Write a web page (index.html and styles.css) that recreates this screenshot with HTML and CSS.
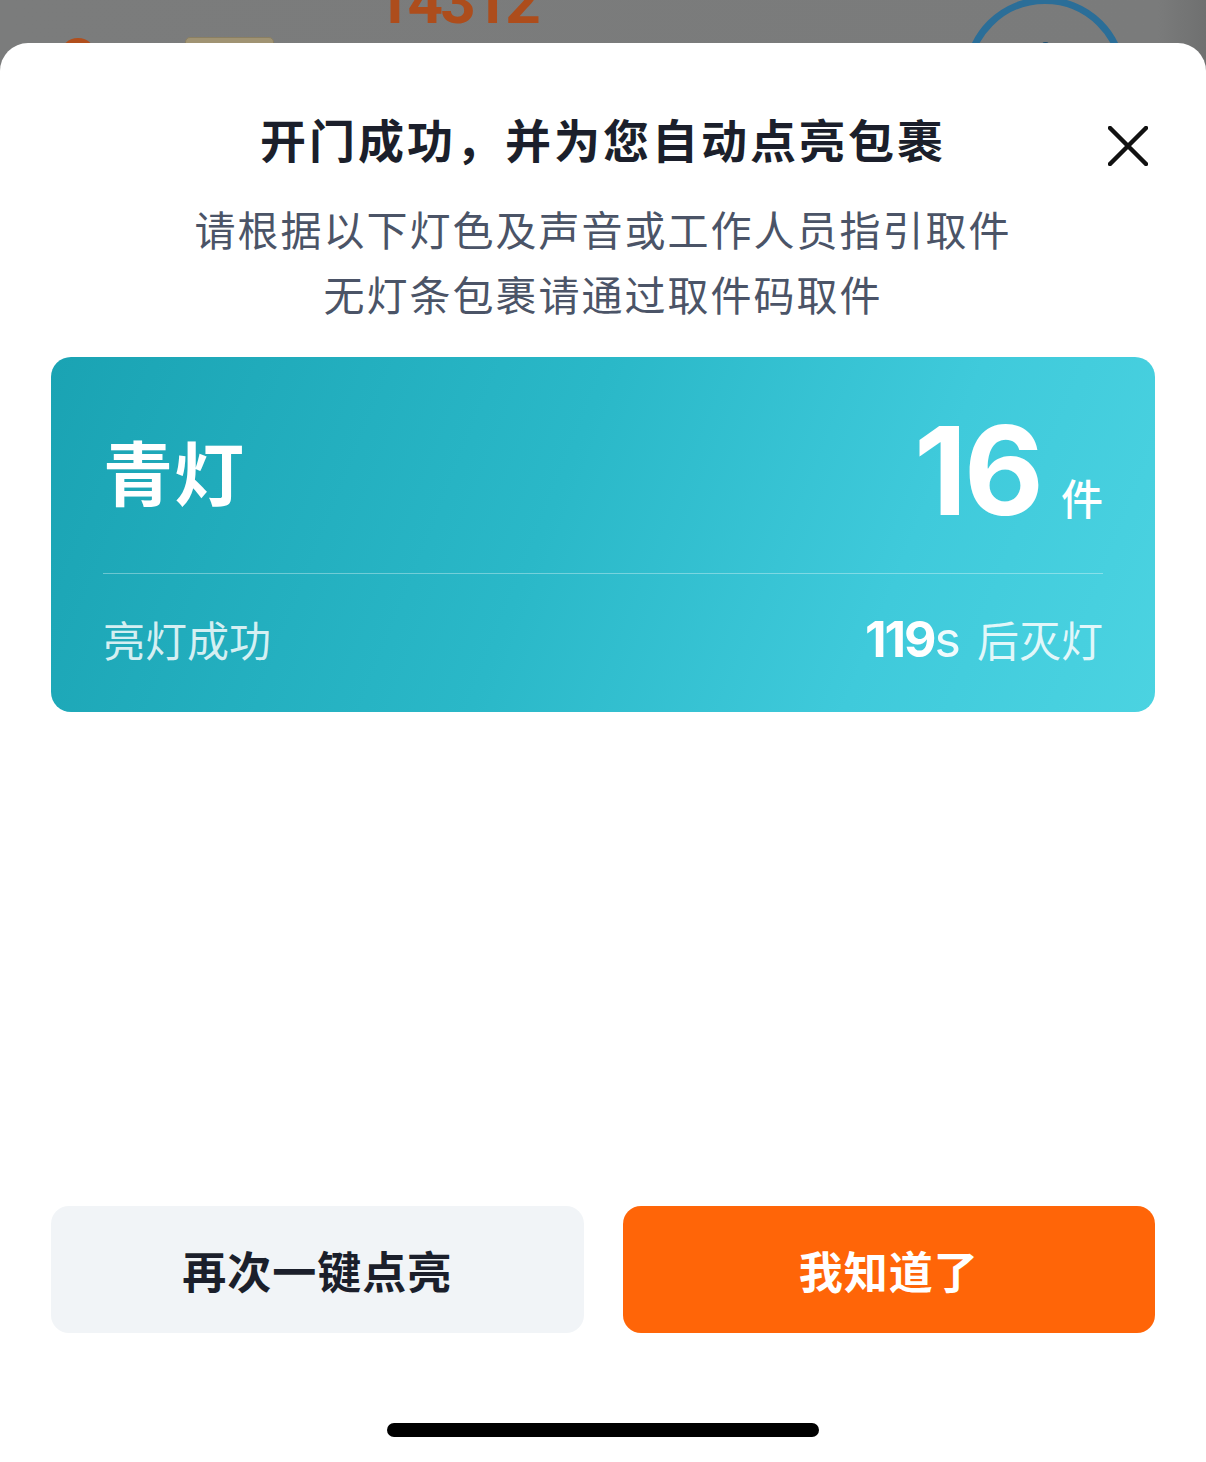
FILE: index.html
```html
<!DOCTYPE html>
<html lang="zh-CN">
<head>
    <meta charset="UTF-8">
    <meta name="viewport" content="width=device-width, initial-scale=1.0">
    <title>开门成功</title>
    <link rel="stylesheet" href="styles.css">
</head>
<body>
    <div class="screen">
        <!-- page behind the sheet, only its bottom edge shows -->
        <div class="backdrop">
            <span class="bg-dot"></span>
            <span class="bg-tag"></span>
            <span class="bg-code">14312</span>
            <span class="bg-ring"><i></i></span>
        </div>

        <div class="sheet">
            <div class="sheet-head">
                <span></span>
                <h2 class="title">开门成功，并为您自动点亮包裹</h2>
                <button class="close" aria-label="关闭">
                    <svg width="40" height="40" viewBox="0 0 40 40">
                        <path d="M2 2 L38 38 M38 2 L2 38" stroke="#111" stroke-width="4.5" stroke-linecap="round" fill="none"/>
                    </svg>
                </button>
            </div>

            <p class="tip">请根据以下灯色及声音或工作人员指引取件<br>无灯条包裹请通过取件码取件</p>

            <div class="light-card">
                <div class="card-top">
                    <span class="light-name">青灯</span>
                    <span class="count"><b>16</b><em>件</em></span>
                </div>
                <div class="card-bottom">
                    <span class="status">亮灯成功</span>
                    <span class="timer"><b>119</b>s<i>后灭灯</i></span>
                </div>
            </div>

            <div class="actions">
                <button class="btn btn-light">再次一键点亮</button>
                <button class="btn btn-primary">我知道了</button>
            </div>

            <div class="home-bar"></div>
        </div>
    </div>
</body>
</html>
```

FILE: styles.css
```css
html, body {
    margin: 0;
    height: 100%;
}
body {
    font-family: "Noto Sans CJK SC", "Noto Sans", sans-serif;
    background: linear-gradient(90deg, #7b7c7c 0%, #7a7b7b 96%, #6f7070 100%);
}
.screen {
    min-height: 100vh;
    display: flex;
    flex-direction: column;
}
.backdrop {
    height: 43px;
    position: relative;
    overflow: hidden;
    flex: none;
}
.bg-dot {
    position: absolute;
    left: 60px;
    top: 38px;
    width: 36px;
    height: 36px;
    border-radius: 50%;
    background: #b14f1d;
}
.bg-tag {
    position: absolute;
    left: 185px;
    top: 37px;
    width: 87px;
    height: 30px;
    border-radius: 5px;
    background: #a09373;
    border: 1px solid #8a7f62;
}
.bg-code {
    position: absolute;
    left: 375px;
    top: -29px;
    font-family: Roboto, "Liberation Sans", sans-serif;
    font-weight: 700;
    font-size: 62px;
    letter-spacing: -3px;
    line-height: 62px;
    color: #ad4d1c;
}
.bg-ring {
    position: absolute;
    left: 964px;
    top: -3px;
    width: 148px;
    height: 148px;
    border: 7px solid #2b6e98;
    border-radius: 50%;
}
.bg-ring i {
    position: absolute;
    left: 71px;
    top: 38px;
    width: 7px;
    height: 10px;
    border-radius: 3px;
    background: #1f4f70;
}

.sheet {
    flex: 1;
    background: #ffffff;
    border-radius: 28px 28px 0 0;
    padding: 65px 51px 25px;
    display: flex;
    flex-direction: column;
}
.sheet-head {
    display: grid;
    grid-template-columns: 1fr auto 1fr;
}
.title {
    margin: 0;
    font-size: 46px;
    line-height: 60px;
    font-weight: 700;
    letter-spacing: 3px;
    color: #1b1f2b;
    white-space: nowrap;
}
.close {
    justify-self: end;
    align-self: start;
    margin: 18px 7px 0 0;
    width: 40px;
    height: 40px;
    padding: 0;
    border: none;
    background: none;
    cursor: pointer;
}
.close svg {
    display: block;
}
.tip {
    margin: 28px 0 0;
    text-align: center;
    font-size: 41px;
    line-height: 65px;
    letter-spacing: 2px;
    color: #4b5467;
}

.light-card {
    margin-top: 31px;
    height: 355px;
    box-sizing: border-box;
    padding: 0 52px;
    border-radius: 20px;
    background: linear-gradient(112deg, #1aa3b3 0%, #2ab8c8 45%, #3fcadb 75%, #4bd3e1 100%);
    color: #ffffff;
    display: flex;
    flex-direction: column;
}
.card-top {
    height: 216px;
    box-sizing: border-box;
    padding-top: 10px;
    display: flex;
    align-items: center;
    justify-content: space-between;
}
.light-name {
    font-size: 70px;
    font-weight: 700;
    letter-spacing: 1px;
}
.count {
    display: flex;
    align-items: baseline;
}
.count b {
    font-family: Inter, Roboto, sans-serif;
    font-size: 123px;
    line-height: 1;
    font-weight: 700;
    letter-spacing: -3px;
}
.count em {
    font-style: normal;
    font-size: 42px;
    font-weight: 500;
    margin-left: 20px;
}
.card-bottom {
    flex: 1;
    border-top: 1px solid rgba(255, 255, 255, 0.35);
    padding-bottom: 10px;
    display: flex;
    align-items: center;
    justify-content: space-between;
}
.status {
    font-size: 42px;
    color: rgba(255, 255, 255, 0.82);
}
.timer {
    font-family: Inter, Roboto, sans-serif;
    font-size: 50px;
    color: rgba(255, 255, 255, 0.92);
}
.timer b {
    font-weight: 700;
    letter-spacing: -2px;
    color: #ffffff;
}
.timer i {
    font-style: normal;
    font-family: "Noto Sans CJK SC", sans-serif;
    font-size: 42px;
    margin-left: 16px;
    color: rgba(255, 255, 255, 0.85);
}

.actions {
    margin-top: auto;
    display: flex;
    gap: 39px;
}
.btn {
    flex: 1;
    height: 127px;
    border: none;
    border-radius: 18px;
    font-family: "Noto Sans CJK SC", sans-serif;
    font-size: 44px;
    font-weight: 700;
    letter-spacing: 1px;
    cursor: pointer;
}
.btn-light {
    background: #f1f4f7;
    color: #1b1f2b;
}
.btn-primary {
    background: #ff6508;
    color: #ffffff;
}
.home-bar {
    margin: 90px auto 0;
    width: 432px;
    height: 14px;
    border-radius: 7px;
    background: #000000;
}
```
